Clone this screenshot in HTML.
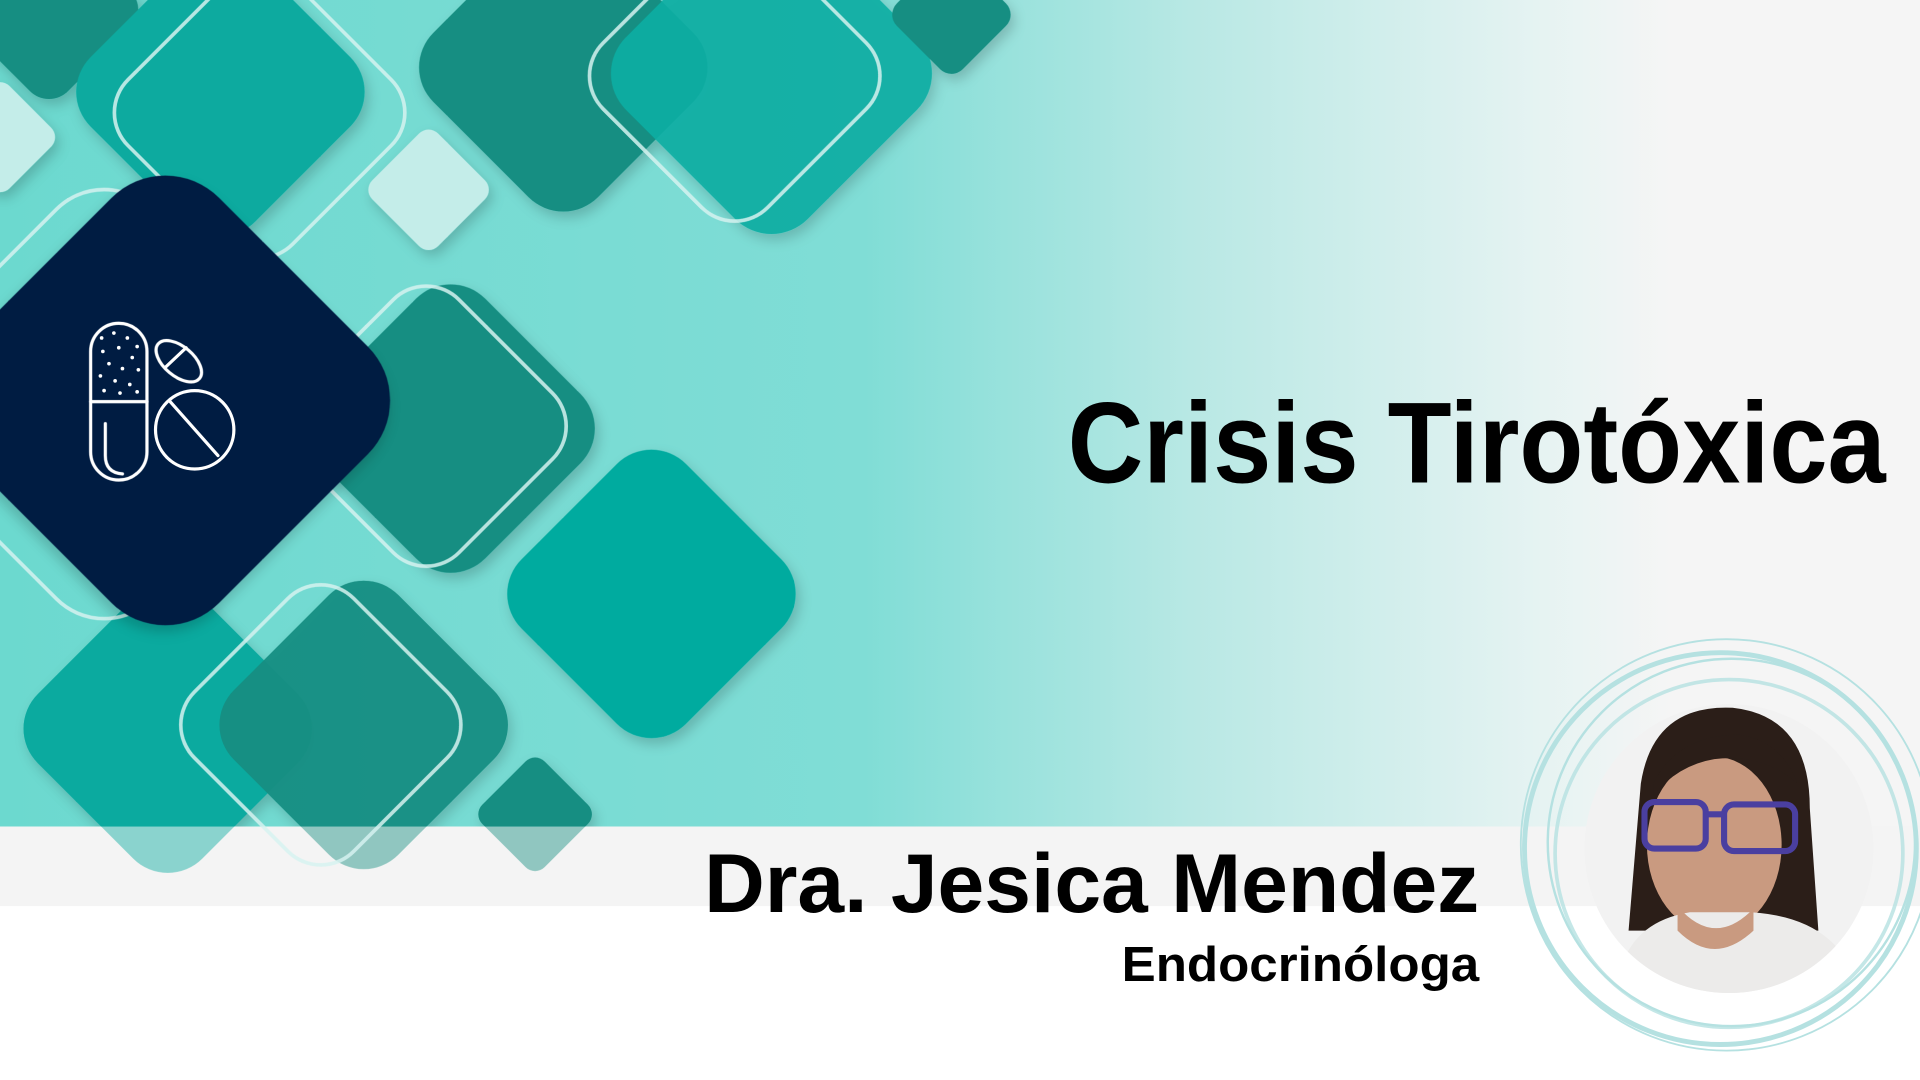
<!DOCTYPE html>
<html><head><meta charset="utf-8"><style>
html,body{margin:0;padding:0;background:#fff;overflow:hidden}
svg{display:block}
</style></head><body>
<svg width="1920" height="1080" viewBox="0 0 1568 882" xmlns="http://www.w3.org/2000/svg">
<defs>
<linearGradient id="bg" x1="0" y1="0" x2="1" y2="0">
<stop offset="0" stop-color="#6cd9cf"/>
<stop offset="0.45" stop-color="#80ddd6"/>
<stop offset="0.62" stop-color="#b8e8e4"/>
<stop offset="0.8" stop-color="#e5f3f2"/>
<stop offset="0.87" stop-color="#f5f5f5"/>
<stop offset="1" stop-color="#f5f5f5"/>
</linearGradient>
<filter id="sh" x="-20%" y="-20%" width="140%" height="140%"><feDropShadow dx="3" dy="5" stdDeviation="5" flood-color="#000" flood-opacity="0.18"/></filter>
<clipPath id="top"><rect x="0" y="0" width="1568" height="675"/></clipPath>
<clipPath id="pc"><circle cx="1412" cy="693" r="118"/></clipPath>
</defs>
<rect width="1568" height="882" fill="#fff"/>
<rect width="1568" height="675" fill="url(#bg)"/>
<rect y="675" width="1568" height="65" fill="#f4f4f4"/>

<g filter="url(#sh)">
<rect x="-58" y="-58" width="116" height="116" rx="22" transform="translate(40,8) rotate(45)" fill="#178e82"/>
<rect x="-95" y="-95" width="190" height="190" rx="40" transform="translate(180,75) rotate(45)" fill="#0aaa9f"/>
<rect x="-35" y="-35" width="70" height="70" rx="11" transform="translate(0,112) rotate(45)" fill="#c4ede9"/>
<rect x="-95" y="-95" width="190" height="190" rx="40" transform="translate(460,55) rotate(45)" fill="#178e82"/>
<rect x="-105" y="-105" width="210" height="210" rx="42" transform="translate(630,60) rotate(45)" fill="#0aaea3" fill-opacity="0.92"/>
<rect x="-38" y="-38" width="76" height="76" rx="11" transform="translate(350,155) rotate(45)" fill="#c4ede9"/>
<rect x="-38" y="-38" width="76" height="76" rx="13" transform="translate(777,12) rotate(45)" fill="#178e82"/>
<rect x="-95" y="-95" width="190" height="190" rx="40" transform="translate(368,350) rotate(45)" fill="#178e82"/>
<rect x="-95" y="-95" width="190" height="190" rx="40" transform="translate(532,485) rotate(45)" fill="#00ab9f"/>
</g>
<g clip-path="url(#top)" filter="url(#sh)">
<rect x="-95" y="-95" width="190" height="190" rx="40" transform="translate(137,595) rotate(45)" fill="#0aaa9f"/>
<rect x="-95" y="-95" width="190" height="190" rx="40" transform="translate(297,592) rotate(45)" fill="#178e82" fill-opacity="0.92"/>
<rect x="-36" y="-36" width="72" height="72" rx="11" transform="translate(437,665) rotate(45)" fill="#178e82"/>
</g>
<g opacity="0.45">
<rect x="-95" y="-95" width="190" height="190" rx="40" transform="translate(137,595) rotate(45)" fill="#0aaa9f"/>
<rect x="-95" y="-95" width="190" height="190" rx="40" transform="translate(297,592) rotate(45)" fill="#178e82"/>
<rect x="-36" y="-36" width="72" height="72" rx="11" transform="translate(437,665) rotate(45)" fill="#178e82"/>
</g>
<rect x="0" y="740" width="600" height="142" fill="#fff"/>

<g fill="none" stroke="#d6f3f0" stroke-width="3" opacity="0.85">
<rect x="-95" y="-95" width="190" height="190" rx="38" transform="translate(212,92) rotate(45)"/>
<rect x="-95" y="-95" width="190" height="190" rx="38" transform="translate(600,62) rotate(45)"/>
<rect x="-140" y="-140" width="280" height="280" rx="55" transform="translate(85,330) rotate(45)"/>
<rect x="-92" y="-92" width="184" height="184" rx="38" transform="translate(348,348) rotate(45)"/>
<rect x="-92" y="-92" width="184" height="184" rx="38" transform="translate(262,592) rotate(45)"/>
</g>

<rect x="-148" y="-148" width="296" height="296" rx="62" transform="translate(135,327) rotate(45)" fill="#001b42" filter="url(#sh)"/>
<g fill="none" stroke="#fff" stroke-width="2.6" stroke-linecap="round">
<rect x="74" y="264" width="46" height="128" rx="23"/>
<line x1="74" y1="328" x2="120" y2="328"/>
<path d="M86 346 V372 Q86 386 100 387"/>
<ellipse cx="146" cy="295" rx="22" ry="12" transform="rotate(40 146 295)"/>
<line x1="135" y1="300" x2="152" y2="284"/>
<circle cx="159" cy="351" r="32"/>
<line x1="139" y1="328" x2="178" y2="372"/>
</g>
<g fill="#fff">
<circle cx="83" cy="276" r="1.5"/><circle cx="93" cy="272" r="1.5"/><circle cx="104" cy="276" r="1.5"/><circle cx="112" cy="283" r="1.5"/>
<circle cx="84" cy="287" r="1.5"/><circle cx="97" cy="284" r="1.5"/><circle cx="108" cy="292" r="1.5"/><circle cx="89" cy="297" r="1.5"/>
<circle cx="100" cy="301" r="1.5"/><circle cx="113" cy="302" r="1.5"/><circle cx="82" cy="307" r="1.5"/><circle cx="94" cy="311" r="1.5"/>
<circle cx="106" cy="314" r="1.5"/><circle cx="85" cy="319" r="1.5"/><circle cx="112" cy="320" r="1.5"/><circle cx="98" cy="321" r="1.5"/>
</g>

<text x="872" y="394" font-family="Liberation Sans, sans-serif" font-weight="700" font-size="94" fill="#000" textLength="668" lengthAdjust="spacingAndGlyphs">Crisis Tirotóxica</text>
<text x="575" y="745" font-family="Liberation Sans, sans-serif" font-weight="700" font-size="68" fill="#000" textLength="633" lengthAdjust="spacingAndGlyphs">Dra. Jesica Mendez</text>
<text x="916" y="801" font-family="Liberation Sans, sans-serif" font-weight="700" font-size="40" fill="#000" textLength="292" lengthAdjust="spacingAndGlyphs">Endocrinóloga</text>

<g fill="none" stroke="#b5e1e1">
<circle cx="1410" cy="690" r="168" stroke-width="1.5"/>
<circle cx="1405" cy="693" r="160" stroke-width="4"/>
<circle cx="1414" cy="688" r="150" stroke-width="2"/>
<circle cx="1412" cy="697" r="142" stroke-width="3" opacity="0.8"/>
</g>
<g clip-path="url(#pc)">
<rect x="1290" y="570" width="250" height="250" fill="#f2f2f2"/>
<path d="M1340 640 Q1350 575 1415 578 Q1478 585 1478 660 L1485 760 L1330 760 Z" fill="#2b1e18"/>
<ellipse cx="1400" cy="690" rx="55" ry="72" fill="#c99a80"/>
<path d="M1350 640 Q1370 600 1420 600 Q1455 605 1468 640 Q1440 615 1400 620 Q1370 625 1350 650 Z" fill="#2b1e18"/>
<path d="M1320 820 Q1320 755 1380 745 L1430 745 Q1510 750 1520 820 Z" fill="#ecebea"/>
<path d="M1370 740 Q1400 775 1432 742 L1432 760 Q1400 790 1370 760 Z" fill="#c99a80"/>
<g fill="none" stroke="#4a3fa0" stroke-width="5">
<rect x="1343" y="655" width="50" height="38" rx="8"/>
<rect x="1408" y="657" width="58" height="38" rx="8"/>
<line x1="1393" y1="665" x2="1408" y2="665"/>
</g>
</g>
</svg>
</body></html>
